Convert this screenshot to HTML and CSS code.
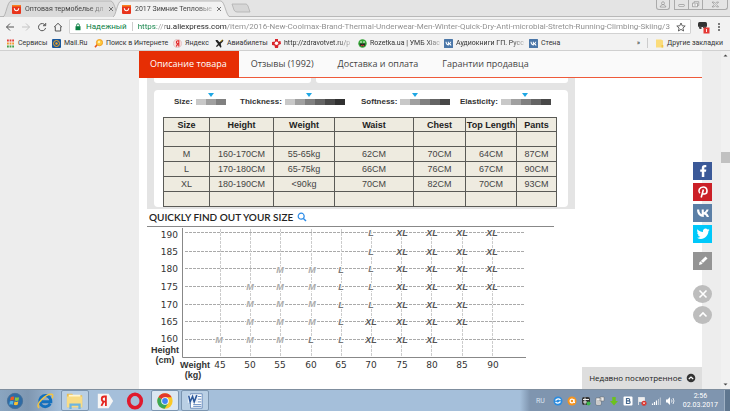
FILE: index.html
```html
<!DOCTYPE html>
<html lang="ru">
<head>
<meta charset="utf-8">
<title>2017 Зимние Тепловые</title>
<link rel="stylesheet" href="styles.css">
</head>
<body>
<svg class="defs" aria-hidden="true">
  <symbol id="ali" viewBox="0 0 9 9"><rect width="9" height="9" rx="1" fill="#e8341c"/><path d="M0 1a1 1 0 0 1 1-1h7a1 1 0 0 1 1 1v.6H0z" fill="#f9831b"/><path d="M2.300 3.300c.3 3.200 4.100 3.200 4.400 0" fill="none" stroke="#fff" stroke-width="1.100"/></symbol>
  <symbol id="vk" viewBox="0 0 18 18"><path d="M9.700 13C5.600 13 3.200 10.200 3 5.500h2.200c.1 3 1.400 4.400 2.500 4.700V5.500h2.100v2.700c1.200-.1 2.300-1.300 2.700-2.700h2.100c-.3 1.700-1.500 3-2.400 3.500.9.400 2.200 1.500 2.800 4h-2.300c-.4-1.300-1.500-2.300-2.900-2.500V13z" fill="#fff"/></symbol>
  <symbol id="close" viewBox="0 0 6 6"><path d="M1 1l4 4M5 1L1 5" stroke="#666" stroke-width=".9"/></symbol>
</svg>

<header class="browser">
  <div class="tabstrip">
    <div class="tab">
      <svg class="tab-shape" viewBox="0 0 118 17" preserveAspectRatio="none"><path d="M0 17C3 16 4 2 8 1h100c4 1 5 15 9 16" fill="#dadada" stroke="#aaa" stroke-width=".8"/></svg>
      <svg class="fav"><use href="#ali"/></svg><span class="tab-title">Оптовая термобелье дл</span>
      <button class="tab-close" aria-label="Закрыть вкладку"><svg><use href="#close"/></svg></button>
    </div>
    <div class="tab active">
      <svg class="tab-shape" viewBox="0 0 118 17" preserveAspectRatio="none"><path d="M0 17C3 16 4 2 8 1h100c4 1 5 15 9 16" fill="#f2f2f2" stroke="#aaa" stroke-width=".8"/></svg>
      <svg class="fav"><use href="#ali"/></svg><span class="tab-title">2017 Зимние Тепловые</span>
      <button class="tab-close" aria-label="Закрыть вкладку"><svg><use href="#close"/></svg></button>
    </div>
    <button class="newtab" aria-label="Новая вкладка"><svg viewBox="0 0 20 10"><path d="M1 1h14q1 0 2 2l2 6H6q-2 0-3-2z" fill="#d6d6d6" stroke="#b0b0b0" stroke-width=".8"/></svg></button>
    <div class="window-buttons">
      <button class="win user" aria-label="Профиль"><svg viewBox="0 0 12 9"><circle cx="6" cy="3.200" r="1.400"/><path d="M3.200 7c.2-3 5.400-3 5.600 0z"/></svg></button>
      <button class="win" aria-label="Свернуть"><svg viewBox="0 0 14 9"><rect x="4" y="4.500" width="6" height="2" rx=".5"/></svg></button>
      <button class="win" aria-label="Развернуть"><svg viewBox="0 0 14 9"><path d="M5.500 3V1.500h5v4H9"/><rect x="4" y="3" width="5" height="4"/><path d="M5.500 5h2"/></svg></button>
      <button class="win wide" aria-label="Закрыть"><svg viewBox="0 0 25 9"><path d="M9.500 2h2l1.300 1.500L14.200 2h2l-2.400 2.500L16.200 7h-2l-1.400-1.500L11.500 7h-2l2.300-2.500z"/></svg></button>
    </div>
  </div>

  <div class="toolbar">
    <button aria-label="Назад"><svg viewBox="0 0 10 10"><path d="M9 5H1.500M5 1.500L1.500 5 5 8.500"/></svg></button>
    <button class="off" aria-label="Вперед"><svg viewBox="0 0 10 10"><path d="M1 5h7.500M5 1.500L8.500 5 5 8.500"/></svg></button>
    <button aria-label="Обновить"><svg viewBox="0 0 10 10"><path d="M8.200 3.300A3.600 3.600 0 1 0 8.600 6M8.700 1v2.700H6"/></svg></button>
    <button aria-label="Домой"><svg viewBox="0 0 10 10"><path d="M1 5.200L5 1.300l4 3.900M2.300 4.500V9h5.400V4.500"/></svg></button>
    <div class="omnibox">
      <svg class="lock" viewBox="0 0 6 8"><rect x=".5" y="3.200" width="5" height="4" fill="#0b8043"/><path d="M1.600 3.500V2.200a1.400 1.400 0 0 1 2.800 0v1.300" fill="none" stroke="#0b8043" stroke-width=".9"/></svg>
      <span class="secure">Надежный</span>
      <input class="url" aria-label="Адрес" value="https://ru.aliexpress.com/item/2016-New-Coolmax-Brand-Thermal-Underwear-Men-Winter-Quick-Dry-Anti-microbial-Stretch-Running-Climbing-Skiing/3">
      <button class="star" aria-label="В закладки"><svg viewBox="0 0 10 10"><path d="M5 1l1.200 2.800 3 .2-2.300 2 .7 3L5 7.400 2.400 9l.7-3L.8 4l3-.2z"/></svg></button>
    </div>
    <button class="ext" aria-label="Расширение"><svg viewBox="0 0 13 14"><rect x="1" y="2" width="9" height="5" rx="1.500" fill="#333"/><path d="M1.500 6h3v3h-2zM6 6h3.500l-.5 2H6z" fill="#444"/><rect x="6.500" y="7.500" width="6" height="6" fill="#e53935"/><path d="M9.500 9v3" stroke="#fff" stroke-width=".9"/></svg></button>
    <button class="menu" aria-label="Меню"><svg viewBox="0 0 4 10"><g fill="#555" stroke="none"><circle cx="2" cy="2" r="1"/><circle cx="2" cy="5" r="1"/><circle cx="2" cy="8" r="1"/></g></svg></button>
  </div>

  <nav class="bookmarks" aria-label="Закладки">
    <a href="#" class="w1"><svg viewBox="0 0 9 9"><path d="M1 1.500h7" stroke="#e53935" stroke-width="1.800" stroke-dasharray="1.800 .8"/><path d="M1 4.500h7" stroke="#f29a2e" stroke-width="1.800" stroke-dasharray="1.800 .8"/><path d="M1 7.500h7" stroke="#43a047" stroke-width="1.800" stroke-dasharray="1.800 .8"/></svg><span>Сервисы</span></a>
    <a href="#" class="w2"><svg viewBox="0 0 9 9"><rect width="9" height="9" rx="1" fill="#17569b"/><circle cx="4.500" cy="4.500" r="3" fill="none" stroke="#f5a623" stroke-width="1"/><circle cx="4.500" cy="4.500" r="1.200" fill="#f5a623"/></svg><span>Mail.Ru</span></a>
    <a href="#" class="w3"><svg viewBox="0 0 9 9"><path d="M3.300 5.500L1 8.200" stroke="#e5531a" stroke-width="1.600"/><circle cx="5.500" cy="3.600" r="3.100" fill="#ffc93c" stroke="#ef9a1b" stroke-width=".9"/><circle cx="5" cy="3" r="1.200" fill="#fff0b0"/></svg><span>Поиск в Интернете</span></a>
    <a href="#" class="w4"><svg viewBox="0 0 9 9"><circle cx="4.500" cy="4.500" r="4.200" fill="#f7dada" stroke="#c9a5a5" stroke-width=".4"/><path d="M5.800 7.500V1.800H4.900a1.400 1.400 0 0 0 0 2.900h.9M4.700 4.800L3.300 7.500" fill="none" stroke="#e02020" stroke-width="1.100"/></svg><span>Яндекс</span></a>
    <a href="#" class="w5"><svg viewBox="0 0 9 9"><path d="M.5 1h2l2 2.200L7 .8l1.300.3-.2 1.200L5.700 4.700 6.500 8l-1 .7-1.700-2.500L2.500 7.500 1 8l.5-1.400L3 5 1 2.500z" fill="#222"/><path d="M5.500 2.500L7.500 1" stroke="#e7ba26" stroke-width="1"/></svg><span>Авиабилеты</span></a>
    <a href="#" class="w6"><svg viewBox="0 0 9 9"><path d="M3 0h3v2.500L8.500 2 9 5 6.500 6 6 9H3L2.500 6.500 0 6V3l3-.5z" fill="#d9252b"/><circle cx="4.500" cy="4.300" r="1.700" fill="#fff"/></svg><span class="fade">http://zdravotvet.ru/p</span></a>
    <a href="#" class="w7"><svg viewBox="0 0 9 9"><circle cx="4.500" cy="4.500" r="4.200" fill="#35a637"/><path d="M1.500 4.500h6q-.4 3-3 3t-3-3" fill="#222"/><path d="M3 6.800q1.500-1 3 0" stroke="#e53935" fill="none"/><circle cx="3" cy="3" r=".8" fill="#fff"/><circle cx="6" cy="3" r=".8" fill="#fff"/></svg><span class="fade">Rozetka.ua | УМБ Xiac</span></a>
    <a href="#" class="w8"><svg viewBox="0 0 18 18"><rect width="18" height="18" rx="1" fill="#4a76a8"/><use href="#vk"/></svg><span class="fade">Аудиокниги ГП. Русс</span></a>
    <a href="#" class="w9"><svg viewBox="0 0 18 18"><rect width="18" height="18" rx="1" fill="#4a76a8"/><use href="#vk"/></svg><span>Стена</span></a>
    <button class="more" aria-label="Ещё">»</button>
    <a href="#" class="other"><svg viewBox="0 0 9 9"><path d="M1 .5h5l2 1v7H1z" fill="#fbdc7a"/><path d="M6.500 6h1.800v2.500H6.500z" fill="#f2c648"/></svg><span>Другие закладки</span></a>
  </nav>
</header>

<main class="page">
  <div class="content">
    <nav class="product-tabs" aria-label="Товар">
      <a href="#" class="current">Описание товара</a>
      <a href="#">Отзывы (1992)</a>
      <a href="#">Доставка и оплата</a>
      <a href="#">Гарантии продавца</a>
    </nav>

    <section class="description">
      <div class="panel">
        <div class="stubs"><div></div><div></div></div>
        <div class="card">
          <div class="traits">
            <div><b>Size:</b><span class="scale mark2"><i></i><i></i><i></i></span></div>
            <div><b>Thickness:</b><span class="scale mark3"><i></i><i></i><i></i><i></i><i></i><i></i></span></div>
            <div><b>Softness:</b><span class="scale mark2"><i></i><i></i><i></i><i></i><i></i></span></div>
            <div><b>Elasticity:</b><span class="scale mark3"><i></i><i></i><i></i><i></i><i></i></span></div>
          </div>
          <table class="sizes">
            <colgroup><col class="c1"><col class="c2"><col class="c3"><col class="c4"><col class="c5"><col class="c6"><col class="c7"></colgroup>
            <thead><tr><th>Size</th><th>Height</th><th>Weight</th><th>Waist</th><th>Chest</th><th>Top Length</th><th>Pants</th></tr></thead>
            <tbody>
              <tr><td></td><td></td><td></td><td></td><td></td><td></td><td></td></tr>
              <tr><td>M</td><td>160-170CM</td><td>55-65kg</td><td>62CM</td><td>70CM</td><td>64CM</td><td>87CM</td></tr>
              <tr><td>L</td><td>170-180CM</td><td>65-75kg</td><td>66CM</td><td>76CM</td><td>67CM</td><td>90CM</td></tr>
              <tr><td>XL</td><td>180-190CM</td><td>&lt;90kg</td><td>70CM</td><td>82CM</td><td>70CM</td><td>93CM</td></tr>
              <tr><td></td><td></td><td></td><td></td><td></td><td></td><td></td></tr>
            </tbody>
          </table>
        </div>
      </div>

      <h2>QUICKLY FIND OUT YOUR SIZE <svg viewBox="0 0 10 10"><circle cx="4.200" cy="4.200" r="3" fill="none" stroke="#2a8be8" stroke-width="1.200"/><path d="M6.400 6.400L9 9" stroke="#2a8be8" stroke-width="1.400"/></svg></h2>

      <svg class="chart" viewBox="147 225 428 160" role="img" aria-label="Height and weight size chart">
        <path d="M147 226.500H554" stroke="#888" stroke-width="1"/>
        <g class="grid">
          <path d="M185 232.500H524M185 251.500H524M185 268.500H524M185 286.500H524M185 304.500H524M185 321.500H524M185 339.500H524"/>
          <path class="v" d="M220.500 229V357M250.500 229V357M280.500 229V357M311.500 229V357M341.500 229V357M371.500 229V357M401.500 229V357M431.500 229V357M462.500 229V357M492.500 229V357"/>
        </g>
        <path d="M182.500 228V357.500H526" fill="none" stroke="#888"/>
        <g class="ylab">
          <text x="178" y="238">190</text><text x="178" y="255">185</text><text x="178" y="272">180</text><text x="178" y="290">175</text><text x="178" y="308">170</text><text x="178" y="325">165</text><text x="178" y="342">160</text>
        </g>
        <g class="xlab">
          <text x="220" y="368">45</text><text x="250" y="368">50</text><text x="280" y="368">55</text><text x="311" y="368">60</text><text x="341" y="368">65</text><text x="371" y="368">70</text><text x="402" y="368">75</text><text x="432" y="368">80</text><text x="462" y="368">85</text><text x="493" y="368">90</text>
        </g>
        <g class="axis">
          <text x="165" y="353">Height</text><text x="165" y="363">(cm)</text><text x="195" y="368">Weight</text><text x="193" y="378">(kg)</text>
        </g>
        <g class="m">
          <text x="280" y="273">M</text><text x="312" y="273">M</text>
          <text x="250" y="290">M</text><text x="280" y="290">M</text><text x="312" y="290">M</text>
          <text x="250" y="307">M</text><text x="280" y="307">M</text><text x="312" y="307">M</text>
          <text x="250" y="325">M</text><text x="280" y="325">M</text><text x="312" y="325">M</text>
          <text x="219" y="343">M</text><text x="250" y="343">M</text><text x="280" y="343">M</text>
        </g>
        <g class="l">
          <text x="371" y="236">L</text><text x="371" y="255">L</text>
          <text x="341" y="273">L</text><text x="371" y="272">L</text>
          <text x="341" y="290">L</text><text x="371" y="290">L</text>
          <text x="341" y="308">L</text><text x="371" y="308">L</text>
          <text x="341" y="325">L</text><text x="311" y="343">L</text><text x="341" y="343">L</text>
        </g>
        <g class="xl">
          <text x="402" y="236">XL</text><text x="432" y="236">XL</text><text x="462" y="236">XL</text><text x="492" y="236">XL</text>
          <text x="402" y="255">XL</text><text x="432" y="255">XL</text><text x="462" y="255">XL</text><text x="492" y="255">XL</text>
          <text x="402" y="272">XL</text><text x="432" y="272">XL</text><text x="462" y="272">XL</text><text x="492" y="272">XL</text>
          <text x="402" y="290">XL</text><text x="432" y="290">XL</text><text x="462" y="290">XL</text><text x="492" y="290">XL</text>
          <text x="402" y="308">XL</text><text x="432" y="308">XL</text><text x="462" y="308">XL</text>
          <text x="371" y="325">XL</text><text x="402" y="325">XL</text><text x="432" y="325">XL</text><text x="462" y="325">XL</text>
          <text x="371" y="343">XL</text><text x="402" y="343">XL</text><text x="432" y="343">XL</text>
        </g>
      </svg>
    </section>
    <button class="recent">Недавно посмотренное <svg viewBox="0 0 10 10"><circle cx="5" cy="5" r="4.300" fill="#333"/><path d="M2.800 6L5 4l2.200 2" fill="none" stroke="#fff" stroke-width="1.200"/></svg></button>
  </div>

  <aside class="share">
    <a href="#" class="fb" aria-label="Facebook"><svg viewBox="0 0 18 18"><path d="M7.800 15V9.700H6.200V7.400h1.600V6c0-2 1.100-3 3-3h1.500v2.300h-1.100c-.7 0-.9.300-.9.900v1.200h2l-.3 2.300h-1.700V15z" fill="#fff"/></svg></a>
    <a href="#" class="pin" aria-label="Pinterest"><svg viewBox="0 0 18 18"><path d="M5.800 10.300C3.600 7.500 5.700 4 9.200 4c4.600 0 5 6.500 1.300 7-1 .1-1.700-.5-1.900-1M9.400 6.500L7.200 14.500" fill="none" stroke="#fff" stroke-width="1.600"/></svg></a>
    <a href="#" class="vk" aria-label="ВКонтакте"><svg viewBox="0 0 18 18"><use href="#vk"/></svg></a>
    <a href="#" class="tw" aria-label="Twitter"><svg viewBox="0 0 18 18"><path d="M3 12.800c1.400.1 2.500-.3 3.400-1-1.200 0-2-.8-2.300-1.700h1C3.800 9.700 3.200 8.700 3.200 7.500l1 .3C3.100 7 2.800 5.500 3.500 4.300 5 6 6.800 7 9 7.100 8.500 5 10 3.600 11.600 3.600c.8 0 1.400.3 1.900.8l1.700-.6-1 1.400 1.500-.4-1.300 1.500c0 5-5.800 10-11.400 6.500z" fill="#fff"/></svg></a>
    <button class="edit" aria-label="Отзыв"><svg viewBox="0 0 18 18"><path d="M5 13l.6-2.700L11.500 4.600l2 2L7.600 12.300z" fill="#fff"/><path d="M6.800 9.200l2 2" stroke="#999"/></svg></button>
    <button class="round first" aria-label="Скрыть"><svg viewBox="0 0 18 18"><path d="M5.500 5.500l7 7M12.500 5.500l-7 7" stroke="#fff" stroke-width="1.600"/></svg></button>
    <button class="round" aria-label="Наверх"><svg viewBox="0 0 18 18"><path d="M5.500 10.500L9 7l3.500 3.500" fill="none" stroke="#fff" stroke-width="1.600"/></svg></button>
  </aside>

  <div class="scrollbar" aria-hidden="true">
    <svg viewBox="0 0 9 9"><path d="M2.500 5.500h4l-2-2z" fill="#444"/></svg>
    <span class="thumb"></span>
    <svg viewBox="0 0 9 9"><path d="M2.500 3.500h4l-2 2z" fill="#444"/></svg>
  </div>
</main>

<footer class="taskbar">
  <button class="task" aria-label="Пуск"><svg viewBox="0 0 20 20"><circle cx="10" cy="10" r="8.500" fill="#2f6ba5" stroke="#466f96"/><path d="M9.200 5.300Q7 4.600 5.300 5.800L4.500 9.400q2-1 4-.2z" fill="#ee5a24"/><path d="M10.200 5.700q2 1 4.400 0L13.900 9.400q-2 1-4.200 0z" fill="#8cc63f"/><path d="M4.300 10.400q2-1 4 0l-.8 3.800q-2-1-3.900 0z" fill="#4db5e8"/><path d="M9.500 10.500q2 1 4.200 0l-.8 3.800q-2 1-4.200 0z" fill="#fbc02d"/></svg></button>
  <button class="task" aria-label="Internet Explorer"><svg viewBox="0 0 20 20"><path d="M15.800 13A6.200 6.200 0 1 1 16.500 10v.8H6" fill="none" stroke="#1470bd" stroke-width="3.200"/><path d="M3.500 17.500C-2 15 11 1.500 17.500 2.500c2 .5 1.200 3 .2 4.500" fill="none" stroke="#f4c542" stroke-width="1.600"/></svg></button>
  <button class="task open" aria-label="Проводник"><svg viewBox="0 0 20 20"><path d="M1 2h6l1 1.500h10V17H1z" fill="#e9bd52"/><path d="M3 3h13v10H3z" fill="#fff6d0"/><path d="M1 5h17v12H1z" fill="#f8dc85"/><path d="M5 19v-5h10v5" fill="none" stroke="#6db5e0" stroke-width="2.500"/></svg></button>
  <button class="task" aria-label="Яндекс"><svg viewBox="0 0 20 20"><path d="M2 2h12l5 8-5 8H2z" fill="#f5f5f5"/><path d="M11 15.500V5H9.200a2.800 2.800 0 0 0 0 5.600H11M8.600 10.600L6 15.500" fill="none" stroke="#e52620" stroke-width="2"/></svg></button>
  <button class="task" aria-label="Opera"><svg viewBox="0 0 20 20"><ellipse cx="10" cy="10" rx="7" ry="7.500" fill="none" stroke="#e0192d" stroke-width="4"/></svg></button>
  <button class="task open lit" aria-label="Chrome"><svg viewBox="0 0 20 20"><circle cx="10" cy="10" r="8.500" fill="#fbc926"/><path d="M10 10L2.600 5.700A8.500 8.500 0 0 1 17.400 5.700H10z" fill="#e2392b"/><path d="M10 10L2.600 5.700A8.500 8.500 0 0 0 9.500 18.500l4-6z" fill="#3aa757"/><circle cx="10" cy="10" r="4.200" fill="#fff"/><circle cx="10" cy="10" r="3.200" fill="#4285f4"/></svg></button>
  <button class="task open" aria-label="Word"><svg viewBox="0 0 20 20"><path d="M5 2h13v16H5z" fill="#fff" stroke="#6788b8"/><path d="M13 5h4M13 8h4M13 11h4M8 14h9M8 16h9" stroke="#5a83bd"/><path d="M2 3h11v9H2z" fill="#e8f0fa"/><path d="M3 4l1.600 7L7.300 5l1.800 6L12 3.500" fill="none" stroke="#2b579a" stroke-width="1.700"/></svg></button>
  <div class="tray">
    <span class="lang">RU</span>
    <svg viewBox="0 0 10 10"><circle cx="5" cy="5" r="4.500" fill="#2a8ce0"/><path d="M2.500 4.500Q5 1.500 7.500 4M7.500 5.500Q5 8.500 2.500 6" fill="none" stroke="#fff" stroke-width="1.200"/></svg>
    <svg viewBox="0 0 10 10"><circle cx="5" cy="5" r="4.500" fill="#f5941e"/><circle cx="5" cy="5" r="1.900" fill="none" stroke="#fff" stroke-width="1.200"/><path d="M7 3v3.500h1" fill="none" stroke="#fff"/></svg>
    <svg viewBox="0 0 10 10"><rect x="1" y="1" width="8" height="8" rx="2" fill="#333"/><path d="M2 3.500h6M2 6h4M4 1.500v7" stroke="#eee"/><circle cx="7.500" cy="7.500" r="2" fill="#3bb54a"/></svg>
    <svg viewBox="0 0 10 10"><path d="M1 2h5v7H1zM5 1h4v4H5z" fill="#eee" stroke="#666" stroke-width=".5"/><path d="M2 5h3M2 7h3" stroke="#777" stroke-width=".6"/></svg>
    <svg viewBox="0 0 10 10"><path d="M3.300 1h3.400v4H9L5 9.500 1 5h2.300z" fill="#6cc21c"/></svg>
    <svg viewBox="0 0 10 10"><rect x=".5" y=".5" width="9" height="9" rx="1" fill="#fff"/><path d="M3.500 2.500h2a1 1 0 0 1 0 2.300h-2zM3.500 4.900h2.300a1.200 1.200 0 0 1 0 2.600H3.500z" fill="none" stroke="#45688e" stroke-width="1.200"/></svg>
    <svg viewBox="0 0 10 10"><path d="M1.500 1v8M2 1.500h5.500v4H2z" fill="#eee" stroke="#eee" stroke-width=".8"/><circle cx="7" cy="7.200" r="2.500" fill="#d9322b"/><path d="M6 6.200l2 2M8 6.200l-2 2" stroke="#fff" stroke-width=".7"/></svg>
    <svg viewBox="0 0 10 10"><path d="M1.500 9V7.500M3.500 9V6M5.500 9V4.500" stroke="#fff" stroke-width="1.200"/><path d="M7.500 9V3M9.300 9V1.500" stroke="#c0cad6" stroke-width="1"/></svg>
    <svg viewBox="0 0 10 10"><path d="M1 3.500h1.500L5 1v8L2.500 6.500H1z" fill="#fff"/><path d="M6.500 3.500q1 1.500 0 3M8 2q2 3 0 6" fill="none" stroke="#fff" stroke-width=".8"/></svg>
    <time class="clock"><span>2:56</span><span>02.03.2017</span></time>
    <button class="desktop" aria-label="Показать рабочий стол"></button>
  </div>
</footer>
</body>
</html>
```
FILE: styles.css
```css
* { box-sizing: border-box; }
html, body { height: 100%; }
body {
  margin: 0;
  display: flex;
  flex-direction: column;
  overflow: hidden;
  background: #ededed;
  font: 7px/10px Roboto, "Open Sans", sans-serif;
  color: #444;
}
button, input { font: inherit; color: inherit; border: 0; padding: 0; margin: 0; background: none; }
a { color: inherit; text-decoration: none; }
svg { display: block; flex: none; }
.defs { position: absolute; width: 0; height: 0; }

/* Browser chrome */
.browser { background: #f2f2f2; border-bottom: 1px solid #d0d0d0; }
.tabstrip { display: flex; height: 17px; padding-left: 3px; background: #e4e4e4; border-bottom: 1px solid #b8b8b8; }
.tab { position: relative; display: flex; align-items: center; width: 118px; height: 17px; padding: 1px 8px 0 9px; gap: 4px; }
.tab + .tab { margin-left: -8px; }
.tab-shape { position: absolute; inset: 0; width: 100%; height: 100%; }
.tab > :not(.tab-shape) { position: relative; }
.fav { width: 9px; height: 9px; }
.tab-title { flex: 1; white-space: nowrap; mask-image: linear-gradient(90deg, #000 80%, #0004); }
.tab-close { width: 6px; height: 6px; margin-right: 4px; }
.tab-close svg { width: 6px; height: 6px; }
.newtab { width: 20px; height: 10px; align-self: center; }
.window-buttons { display: flex; margin-left: auto; padding-right: 2px; }
.win { width: 15px; height: 10px; border: 1px solid #aaa; border-top: 0; margin-left: -1px; }
.win.user { width: 14px; margin-right: 5px; border-radius: 0 0 3px 3px; }
.win.wide { width: 26px; border-radius: 0 0 3px 0; }
.win svg { width: 100%; height: 9px; fill: #f4f4f4; stroke: #888; stroke-width: .7; }

.toolbar { display: flex; align-items: center; height: 19px; padding: 0 8px 0 5px; gap: 6px; }
.toolbar > button { width: 10px; height: 10px; }
.toolbar > button svg { width: 10px; height: 10px; fill: none; stroke: #555; stroke-width: 1; }
.toolbar > .off svg { stroke: #c4c4c4; }
.toolbar > .ext, .toolbar > .ext svg { width: 13px; height: 14px; stroke: none; }
.toolbar > .menu, .toolbar > .menu svg { width: 6px; }
.omnibox { display: flex; flex: 1; align-items: center; height: 15px; padding: 0 4px 0 5px; gap: 5px; background: #fff; border: 1px solid #d2d2d2; border-radius: 1px; font-size: 8px; }
.lock { width: 6px; height: 8px; }
.secure { color: #0b8043; padding-right: 5px; border-right: 1px solid #ccc; line-height: 9px; }
.url {
  flex: 1;
  min-width: 0;
  height: 13px;
  color: transparent;
  background: linear-gradient(90deg, #0b8043 19px, #999 19px, #999 27px, #222 27px, #222 89px, #8a8a8a 89px);
  background-clip: text;
}
.star svg { width: 10px; height: 10px; fill: none; stroke: #555; stroke-width: .9; }

.bookmarks { display: flex; align-items: center; height: 14px; padding: 0 7px 0 6px; color: #333; }
.bookmarks a { display: flex; align-items: center; gap: 3px; white-space: nowrap; }
.bookmarks svg { width: 9px; height: 9px; }
.w1 { width: 46px; }
.w2 { width: 42px; }
.w3 { width: 79px; }
.w4 { width: 42px; }
.w5 { width: 57px; }
.w6, .w7 { width: 86px; }
.w8 { width: 85px; }
.bookmarks .fade { mask-image: linear-gradient(90deg, #000 80%, #0004); }
.more { margin-left: auto; padding-right: 7px; border-right: 1px solid #ccc; }
.bookmarks .other { margin-left: 7px; }

/* Page */
.page { position: relative; flex: 1; min-height: 0; display: flex; padding-left: 139px; }
.content { position: relative; flex: 1; min-width: 0; display: flex; flex-direction: column; background: #fff; overflow: hidden; margin-right: 19px; }
.product-tabs { display: flex; flex: none; height: 27px; font: 9px/26px "Open Sans", sans-serif; background: #fafafa; border-bottom: 1px solid #ee5a3a; white-space: nowrap; }
.product-tabs a { padding: 0 12px; }
.product-tabs .current { padding: 0 12px 0 11px; height: 27px; background: #e62e04; color: #fff; }

.description { padding-left: 8px; }
.panel { width: 428px; padding: 0 7px 2px; background: #e4e4e4; }
.stubs { display: grid; grid-template-columns: 157px 1fr; gap: 5px; height: 5px; }
.stubs div { background: #fff; border-radius: 0 0 3px 3px; }
.card { margin-top: 7px; padding: 8px 0 0 9px; background: #fff; border-radius: 4px; }
.traits { display: grid; grid-template-columns: 66px 121px 99px auto; justify-content: start; padding-left: 11px; font: bold 8px/8px "Liberation Sans", Arial, sans-serif; color: #333; }
.traits div { display: flex; gap: 3px; align-items: center; }
.scale { position: relative; display: flex; }
.scale i { width: 10px; height: 6px; }
.scale i:nth-child(1) { background: #c8c8c8; }
.scale i:nth-child(2) { background: #a0a0a0; }
.scale i:nth-child(3) { background: #808080; }
.scale i:nth-child(4) { background: #646464; }
.scale i:nth-child(5) { background: #484848; }
.scale i:nth-child(6) { background: #303030; }
.scale::before { content: ""; position: absolute; top: -6px; border: 3px solid transparent; border-top: 4px solid #1ea7e4; border-bottom: 0; }
.mark2::before { left: 12px; }
.mark3::before { left: 21px; }
.sizes { width: 394px; margin-top: 11px; table-layout: fixed; border-collapse: collapse; background: #eeebe0; font: 9px/10px "Liberation Sans", Arial, sans-serif; color: #444; text-align: center; }
.sizes tr { height: 15px; }
.sizes th, .sizes td { padding: 0; border: 1px solid #5a5a56; white-space: nowrap; }
.sizes th { color: #222; }
.sizes thead tr { height: 14px; }
.c1 { width: 46px; }
.c2 { width: 64px; }
.c3 { width: 61px; }
.c4 { width: 79px; }
.c5 { width: 52px; }
.c6 { width: 51px; }
.c7 { width: 40px; }

h2 { display: flex; align-items: center; gap: 4px; margin: 0; padding: 0 2px; font: 600 10px/16px Lato, sans-serif; color: #222; }
h2 svg { width: 10px; height: 10px; }
.chart { width: 428px; height: 160px; font-family: "Liberation Sans", Arial, sans-serif; }
.grid { fill: none; stroke: #aaa; stroke-dasharray: 3 1; }
.grid .v { stroke: #ccc; }
.ylab { text-anchor: end; }
.xlab { text-anchor: middle; }
.ylab, .xlab { font-family: "DejaVu Sans", sans-serif; font-size: 9px; fill: #333; }
.axis { text-anchor: middle; font-size: 9px; font-weight: bold; fill: #333; }
.m, .l, .xl { text-anchor: middle; font-size: 9px; font-weight: bold; font-style: italic; paint-order: stroke; stroke: #fff; stroke-width: 2px; }
.m { fill: #aaa; }
.l { fill: #777; }
.xl { fill: #555; }

.recent { position: absolute; right: 0; bottom: 0; display: flex; align-items: center; gap: 4px; height: 22px; padding: 0 6px 0 7px; background: #dedede; color: #222; font: 8px/10px "Open Sans", sans-serif; white-space: nowrap; }
.recent svg { width: 10px; height: 10px; }

.share { position: absolute; right: 18px; top: 111px; display: flex; flex-direction: column; gap: 3px; }
.share a, .share button { display: flex; justify-content: center; width: 19px; height: 18px; }
.share svg { width: 18px; height: 18px; }
.fb { background: #3b5998; }
.pin { background: #cb2027; }
.vk { background: #5b7fa6; }
.tw { background: #00c8fa; }
.share .edit { margin-top: 6px; background: #949494; }
.share .round { background: #bdbdbd; border-radius: 50%; }
.share .first { margin-top: 12px; }

.scrollbar { display: flex; flex-direction: column; width: 9px; background: #f1f1f1; }
.scrollbar svg { width: 9px; height: 9px; }
.thumb { height: 11px; margin: 92px 0 auto; background: #c1c1c1; }

/* Taskbar */
.taskbar { display: flex; align-items: center; height: 22px; padding-left: 1px; border-top: 1px solid #7f8e9e; background: linear-gradient(90deg, #8aa5c0, #7f97b1 28px, #a5bfda 62px, #a5bfda 520px, #7f95af 530px); }
.task { display: flex; align-items: center; justify-content: center; width: 28px; height: 21px; margin-right: 2px; border: 1px solid transparent; border-radius: 2px; }
.task svg { width: 18px; height: 18px; }
.task.open { background: #b9cfe4; border-color: #7b95b0; }
.task.lit { background: #dbe7f2; }
.tray { display: flex; align-items: center; gap: 4px; margin-left: auto; height: 100%; color: #fff; }
.tray svg { width: 10px; height: 10px; }
.lang { margin-right: 4px; color: #dde6f0; }
.clock { display: flex; flex-direction: column; align-items: center; padding: 0 2px 0 4px; line-height: 9px; }
.desktop { width: 6px; height: 100%; background: #5f7790; border-left: 1px solid #9fb1c4; }
```
